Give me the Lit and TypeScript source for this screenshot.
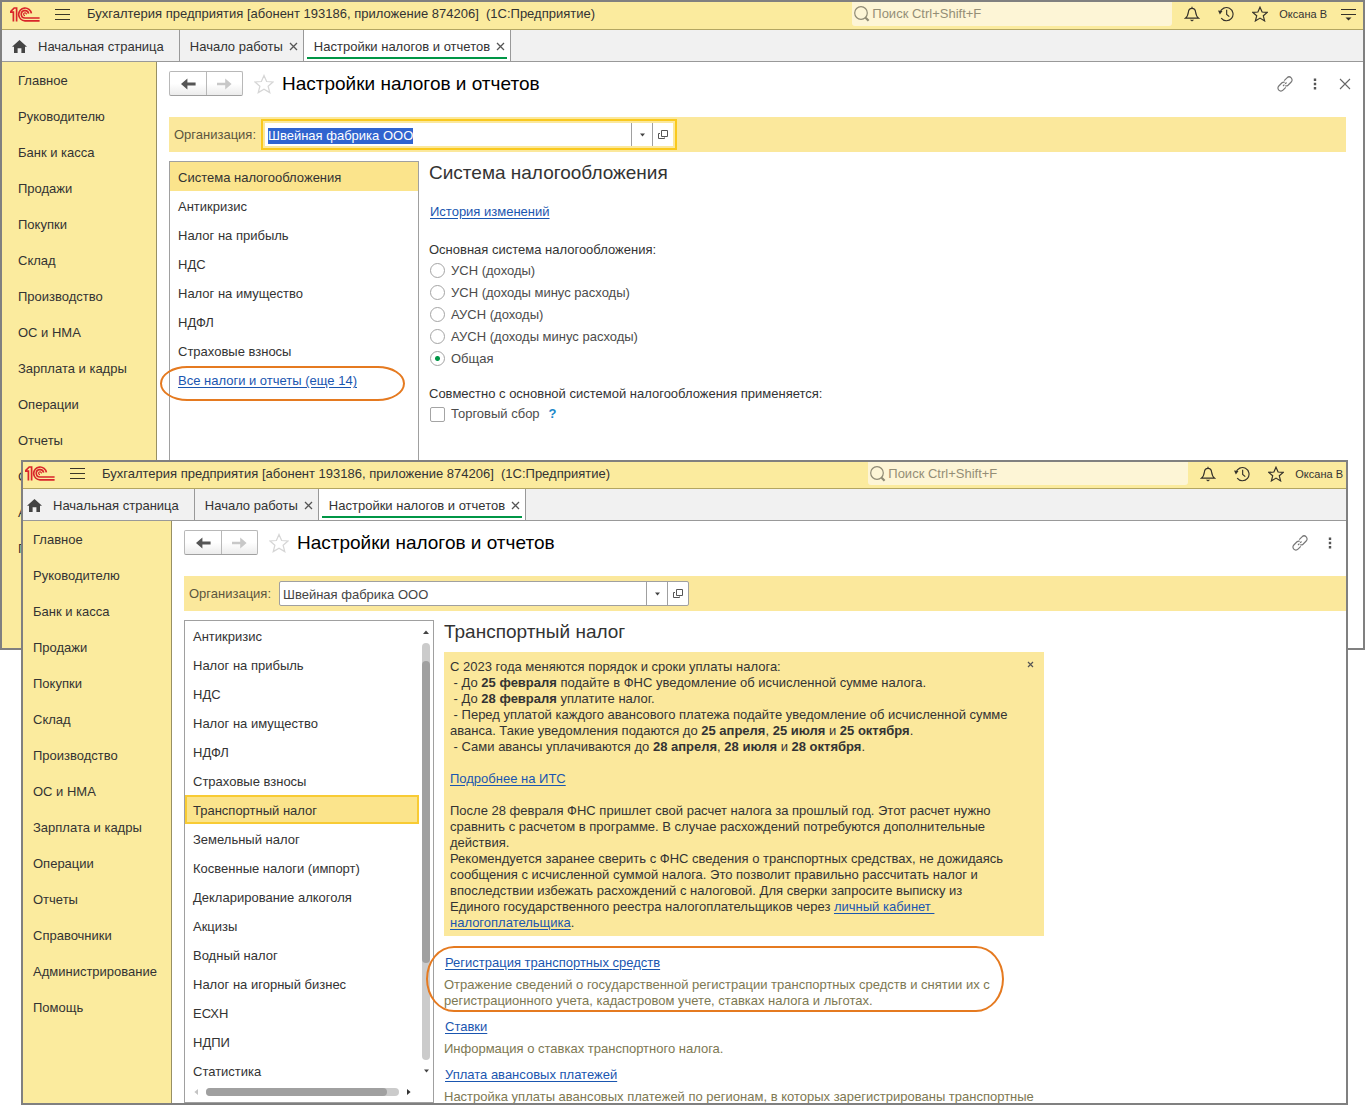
import { LitElement, html, css, svg, nothing } from "lit";
import { customElement, property, query } from "lit/decorators.js";
import { classMap } from "lit/directives/class-map.js";

const SECTIONS = [
  "Главное", "Руководителю", "Банк и касса", "Продажи", "Покупки", "Склад", "Производство",
  "ОС и НМА", "Зарплата и кадры", "Операции", "Отчеты", "Справочники", "Администрирование", "Помощь",
];

const TAXES_SHORT = [
  "Система налогообложения", "Антикризис", "Налог на прибыль", "НДС", "Налог на имущество",
  "НДФЛ", "Страховые взносы",
];

const TAXES_FULL = [
  "Антикризис", "Налог на прибыль", "НДС", "Налог на имущество", "НДФЛ", "Страховые взносы",
  "Транспортный налог", "Земельный налог", "Косвенные налоги (импорт)", "Декларирование алкоголя",
  "Акцизы", "Водный налог", "Налог на игорный бизнес", "ЕСХН", "НДПИ", "Статистика",
];

const SYSTEMS = [
  "УСН (доходы)", "УСН (доходы минус расходы)", "АУСН (доходы)", "АУСН (доходы минус расходы)", "Общая",
];

const starPath = "M8 1.2 L10.1 6 L15.2 6.4 L11.3 9.8 L12.6 14.9 L8 12.1 L3.4 14.9 L4.7 9.8 L0.8 6.4 L5.9 6 Z";

const icons = {
  logo: svg`<svg width="30" height="15" viewBox="0 0 30 15" fill="none" stroke="#d9252a" stroke-width="1.7">
    <path d="M0 5.2 H3.4 V14.4 M0.6 4.6 L4.2 1 H6.6 V14.4"/>
    <path d="M21.4 6.4 A6.4 6.4 0 1 0 15 13.8 H29.6"/>
    <path d="M18.6 6.6 A3.7 3.7 0 1 0 15 11 H29.6"/>
    <path d="M16.4 7.4 A1.4 1.4 0 1 0 15 8.6" stroke-width="1.2"/>
  </svg>`,
  menu: svg`<svg width="15" height="13" viewBox="0 0 15 13" stroke="#3a3628"><path d="M0 1.5H15M0 6.5H15M0 11.5H15"/></svg>`,
  search: svg`<svg width="16" height="16" viewBox="0 0 16 16" fill="none" stroke="#8f8a74"><circle cx="7" cy="7" r="6.3" stroke-width="1.2"/><path d="M11.6 11.8 L14.6 14.8" stroke-width="2.2"/></svg>`,
  bell: svg`<svg width="16" height="16" viewBox="0 0 16 16" fill="none" stroke="#34312a" stroke-width="1.2"><path d="M8 0.8 V2.4 M1.4 12.2 H14.6 C12.4 10.6 12 9 11.6 6 C11.3 3.6 10 2.4 8 2.4 C6 2.4 4.7 3.6 4.4 6 C4 9 3.6 10.6 1.4 12.2 Z"/><path d="M5.8 13.8 H10.2 L8 15.6 Z" fill="#34312a" stroke="none"/></svg>`,
  history: svg`<svg width="16" height="16" viewBox="0 0 17 16" fill="none" stroke="#34312a" stroke-width="1.2"><path d="M2.2 6.4 A7 7 0 1 1 3.4 12.4"/><path d="M9.2 3.6 V8.4 L12 10.8"/><path d="M0 4.2 L4.8 4.8 L2 8.4 Z" fill="#34312a" stroke="none"/></svg>`,
  star: svg`<svg width="16" height="16" viewBox="0 0 16 16" fill="none" stroke="#34312a" stroke-width="1.2"><path d=${starPath}/></svg>`,
  bigStar: svg`<svg width="20" height="20" viewBox="0 0 16 16" fill="none" stroke="#d6d6d6"><path d=${starPath}/></svg>`,
  options: svg`<svg width="15" height="14" viewBox="0 0 15 14" stroke="#34312a"><path d="M0 2.5H15M0 7.5H15"/><path d="M4.5 10.6 H10.5 L7.5 13.6 Z" fill="#34312a" stroke="none"/></svg>`,
  home: svg`<svg width="15" height="13" viewBox="0 0 15 13" fill="#444"><path d="M7.5 0 L15 6.8 H13 V13 H9.4 V8.2 H5.6 V13 H2 V6.8 H0 Z"/></svg>`,
  close: svg`<svg width="9" height="9" viewBox="0 0 9 9" stroke="#555" stroke-width="1.3"><path d="M1 1 L8 8 M8 1 L1 8"/></svg>`,
  closeForm: svg`<svg width="12" height="12" viewBox="0 0 12 12" stroke="#666" stroke-width="1.1"><path d="M1 1 L11 11 M11 1 L1 11"/></svg>`,
  closeNote: svg`<svg width="7" height="7" viewBox="0 0 7 7" stroke="#555" stroke-width="1.2"><path d="M1 1 L6 6 M6 1 L1 6"/></svg>`,
  back: svg`<svg width="15" height="12" viewBox="0 0 15 12" fill="#555"><path d="M0 6 L6.4 0.6 V4.6 H14.6 V7.4 H6.4 V11.4 Z"/></svg>`,
  forward: svg`<svg width="15" height="12" viewBox="0 0 15 12" fill="#c8c8c8"><path d="M14.6 6 L8.2 0.6 V4.8 H0 V7.2 H8.2 V11.4 Z"/></svg>`,
  link: svg`<svg width="16" height="16" viewBox="0 0 16 16" fill="none" stroke="#777" stroke-width="1.2"><path d="M7.2 4.6 L10 1.8 A2.9 2.9 0 0 1 14.2 6 L11 9.2 A2.9 2.9 0 0 1 8.2 9.8"/><path d="M8.8 11.4 L6 14.2 A2.9 2.9 0 0 1 1.8 10 L5 6.8 A2.9 2.9 0 0 1 7.8 6.2"/><path d="M6 10 L10 6" stroke-dasharray="2 1"/></svg>`,
  dots: svg`<svg width="4" height="12" viewBox="0 0 4 12" fill="#555"><path d="M0.8 0.6h2.4v2.4h-2.4zM0.8 4.8h2.4v2.4h-2.4zM0.8 9h2.4v2.4h-2.4z"/></svg>`,
  down: svg`<svg width="5" height="4" viewBox="0 0 5 4" fill="#444"><path d="M0 0.4 H5 L2.5 3.6 Z"/></svg>`,
  open: svg`<svg width="10" height="9" viewBox="0 0 10 9" fill="none" stroke="#555"><path d="M3.5 0.5 H9.5 V6.5 H3.5 Z M2 3.5 H0.5 V8.5 H6.5 V7.5"/></svg>`,
  up: svg`<svg width="6" height="4" viewBox="0 0 6 4" fill="#444"><path d="M0 4 H6 L3 0.4 Z"/></svg>`,
  left: svg`<svg width="4" height="6" viewBox="0 0 4 6" fill="#c4c4c4"><path d="M4 0 V6 L0.4 3 Z"/></svg>`,
  right: svg`<svg width="4" height="6" viewBox="0 0 4 6" fill="#333"><path d="M0 0 V6 L3.6 3 Z"/></svg>`,
};

@customElement("app-window")
export class AppWindow extends LitElement {
  @property({ type: Boolean, reflect: true }) tight = false;

  static styles = css`
    :host {
      --lead: 0px;
      --lift: 0px;
      display: flex;
      flex-direction: column;
      box-sizing: border-box;
      overflow: hidden;
      border: 2px solid #808080;
      background: #fff;
      color: #333;
      font: 13px/16px "Liberation Sans", Arial, sans-serif;
    }
    :host([tight]) {
      --lead: 6px;
      --lift: 1px;
    }
    button {
      display: flex;
      align-items: center;
      justify-content: center;
      padding: 0;
      border: 0;
      background: none;
      color: inherit;
      font: inherit;
    }
    svg {
      display: block;
      flex: none;
    }
    .bar {
      flex: none;
      display: flex;
      align-items: center;
      height: calc(24px - var(--lift));
      padding: 0 7px 3px calc(8px - var(--lead));
      border-bottom: 1px solid #b3a662;
      background: #fbeb9e;
    }
    :host([tight]) .bar {
      padding-right: 3px;
    }
    .menu {
      margin: 0 17px 0 15px;
    }
    .caption {
      flex: 1;
      white-space: nowrap;
    }
    .search {
      display: flex;
      align-items: center;
      align-self: stretch;
      gap: 2px;
      width: 318px;
      padding-left: 2px;
      border-radius: 0 0 3px 3px;
      background: #fdf5d6;
    }
    .search input {
      flex: 1;
      min-width: 0;
      padding: 0;
      border: 0;
      outline: 0;
      background: none;
      font: inherit;
    }
    .search input::placeholder {
      color: #948e76;
      opacity: 1;
    }
    .tools {
      display: flex;
      gap: 18px;
      margin: 0 11px 0 12px;
    }
    .user {
      font-size: 11px;
      white-space: nowrap;
    }
    .options {
      margin-left: 14px;
    }
    .tabs {
      flex: none;
      display: flex;
      height: 31px;
      border-bottom: 1px solid #999;
      background: #f1f1f1;
    }
    .tab {
      display: flex;
      align-items: center;
      gap: 6px;
      padding: 2px 5px 0 10px;
      border-right: 1px solid #999;
      white-space: nowrap;
    }
    .tab.first {
      gap: 11px;
      padding: 2px 15px 0 calc(10px - var(--lead));
    }
    .tab.active {
      padding: 0 3px;
      background: #fff;
    }
    .inner {
      display: flex;
      align-items: center;
      align-self: stretch;
      gap: 6px;
      margin-bottom: 2px;
      padding: 6px 2px 0 7px;
      border-bottom: 2px solid #009646;
    }
    .body {
      flex: 1;
      display: flex;
      min-height: 0;
    }
    .sections {
      flex: none;
      box-sizing: border-box;
      width: calc(155px - var(--lead));
      padding-top: 1px;
      border-right: 1px solid #989064;
      background: #fbeb9e;
    }
    .sections a {
      display: block;
      padding-left: calc(16px - var(--lead));
      color: inherit;
      line-height: 36px;
      text-decoration: none;
      white-space: nowrap;
    }
    .form {
      flex: 1;
      display: flex;
      flex-direction: column;
      min-width: 0;
      padding: 9px 0 0 12px;
    }
    .head {
      flex: none;
      display: flex;
      align-items: center;
      height: 25px;
      margin-bottom: 21px;
      padding-right: 8px;
    }
    :host([tight]) .head {
      padding-right: 6px;
    }
    .nav {
      display: flex;
      box-sizing: border-box;
      height: 25px;
      margin-right: 11px;
      border: 1px solid #b8b8b8;
      border-bottom-color: #a0a0a0;
      border-radius: 2px;
      background: linear-gradient(#fff 50%, #ececec);
    }
    .nav button {
      width: 36px;
    }
    .nav button + button {
      border-left: 1px solid #b8b8b8;
    }
    h1 {
      flex: 1;
      margin: 0 0 0 8px;
      color: #000;
      font-size: 19px;
      font-weight: 400;
      line-height: 24px;
      white-space: nowrap;
    }
    .acts {
      display: flex;
      gap: 10px;
    }
    .acts button {
      width: 20px;
      height: 20px;
    }
  `;

  render() {
    return html`
      <header class="bar">
        ${icons.logo}
        <button class="menu" aria-label="Меню">${icons.menu}</button>
        <span class="caption">Бухгалтерия предприятия [абонент 193186, приложение 874206]&nbsp; (1С:Предприятие)</span>
        <label class="search">${icons.search}<input type="search" aria-label="Поиск" placeholder="Поиск Ctrl+Shift+F" /></label>
        <div class="tools">
          <button aria-label="Уведомления">${icons.bell}</button>
          <button aria-label="История">${icons.history}</button>
          <button aria-label="Избранное">${icons.star}</button>
        </div>
        <span class="user">Оксана В</span>
        ${this.tight ? nothing : html`<button class="options" aria-label="Настройки">${icons.options}</button>`}
      </header>
      <nav class="tabs">
        <div class="tab first">${icons.home}<span>Начальная страница</span></div>
        <div class="tab"><span>Начало работы</span><button aria-label="Закрыть">${icons.close}</button></div>
        <div class="tab active">
          <div class="inner"><span>Настройки налогов и отчетов</span><button aria-label="Закрыть">${icons.close}</button></div>
        </div>
      </nav>
      <div class="body">
        <nav class="sections">${SECTIONS.map((s) => html`<a href="#">${s}</a>`)}</nav>
        <main class="form">
          <div class="head">
            <div class="nav">
              <button aria-label="Назад">${icons.back}</button>
              <button aria-label="Вперед">${icons.forward}</button>
            </div>
            <button aria-label="В избранное">${icons.bigStar}</button>
            <h1>Настройки налогов и отчетов</h1>
            <div class="acts">
              <button aria-label="Ссылка">${icons.link}</button>
              <button aria-label="Еще">${icons.dots}</button>
              ${this.tight ? nothing : html`<button aria-label="Закрыть">${icons.closeForm}</button>`}
            </div>
          </div>
          <slot></slot>
        </main>
      </div>
    `;
  }
}

@customElement("app-root")
export class AppRoot extends LitElement {
  @query(".rear") private rear!: AppWindow;
  @query("#org-back") private orgInput!: HTMLInputElement;

  static styles = css`
    :host {
      position: relative;
      display: block;
      min-height: 100vh;
      overflow: hidden;
      background: #fff;
    }
    app-window {
      position: absolute;
    }
    .rear {
      top: 0;
      left: 0;
      right: 1px;
      height: 650px;
    }
    .front {
      top: 460px;
      left: 21px;
      right: 18px;
      bottom: 2px;
    }
    svg {
      display: block;
      flex: none;
    }
    button {
      display: flex;
      align-items: center;
      justify-content: center;
      padding: 0;
      border: 0;
      background: none;
      font: inherit;
    }
    a {
      color: #1a56b0;
      text-underline-offset: 2px;
    }
    .org {
      flex: none;
      display: flex;
      align-items: center;
      height: 35px;
      margin-bottom: 9px;
      padding-left: 5px;
      background: #fbe89c;
    }
    .rear .org {
      margin-right: 17px;
    }
    .org label {
      width: 90px;
      color: #5c563f;
    }
    .field {
      display: flex;
      box-sizing: border-box;
      width: 410px;
      height: 25px;
      border: 1px solid #a0a0a0;
      border-radius: 2px;
      background: #fff;
    }
    .rear .field {
      border-color: #fbe89c;
      outline: 2px solid #fac91e;
      outline-offset: 1px;
      border-radius: 0;
    }
    .field input {
      flex: 1;
      min-width: 0;
      padding: 3px 3px 0;
      border: 0;
      outline: 0;
      background: none;
      color: #444;
      caret-color: transparent;
      font: inherit;
    }
    .field input::selection {
      background: #3064cf;
      color: #fff;
    }
    .field button {
      width: 21px;
      border-left: 1px solid #a0a0a0;
    }
    .cols {
      flex: 1;
      display: flex;
      gap: 10px;
      min-height: 0;
    }
    .panel {
      flex: none;
      position: relative;
      display: flex;
      flex-direction: column;
      box-sizing: border-box;
      width: 250px;
      border: 1px solid #a0a0a0;
    }
    .rows {
      flex: 1;
      display: flex;
      min-height: 0;
    }
    .list {
      flex: 1;
      margin: 0;
      padding: 0;
      list-style: none;
    }
    .list li {
      box-sizing: border-box;
      height: 29px;
      padding-left: 8px;
      line-height: 31px;
    }
    .rear .list .current {
      background: #fbe48c;
    }
    .front .list .current {
      padding-left: 6px;
      border: 2px solid #f8cb34;
      background: #fbe48c;
      line-height: 27px;
    }
    .vbar {
      display: flex;
      flex-direction: column;
      align-items: center;
      gap: 9px;
      width: 14px;
      padding: 9px 0 11px;
    }
    .vtrack {
      flex: 1;
      display: flex;
      flex-direction: column;
      width: 8px;
      border-radius: 4px;
      background: #cbcbcb;
    }
    .vtrack::before {
      content: "";
      flex: 18;
    }
    .vtrack::after {
      content: "";
      flex: 97;
    }
    .vthumb {
      flex: 302;
      border-radius: 4px;
      background: #a0a0a0;
    }
    .hbar {
      flex: none;
      display: flex;
      align-items: center;
      gap: 8px;
      height: 16px;
      margin: 0 22px 2px 9px;
    }
    .htrack {
      flex: 1;
      height: 8px;
      border-radius: 4px;
      background: #cbcbcb;
    }
    .hthumb {
      width: 94%;
      height: 8px;
      border-radius: 4px;
      background: #a0a0a0;
    }
    .mark {
      position: absolute;
      box-sizing: border-box;
      border: 2px solid #e57a20;
      pointer-events: none;
    }
    .mark.all {
      top: 204px;
      left: -10px;
      width: 245px;
      height: 35px;
      border-radius: 28px / 18px;
    }
    .mark.reg {
      top: -9px;
      left: -18px;
      width: 578px;
      height: 66px;
      border-radius: 28px / 33px;
    }
    .side {
      flex: 1;
      min-width: 0;
    }
    h2 {
      margin: 0;
      font-size: 19px;
      font-weight: 400;
      line-height: 24px;
    }
    .history {
      display: block;
      margin: 19px 0 22px 1px;
    }
    fieldset {
      margin: 0 0 17px;
      padding: 0;
      border: 0;
    }
    legend {
      margin: 0 0 1px;
      padding: 0;
    }
    .opt {
      display: flex;
      align-items: center;
      gap: 6px;
      height: 22px;
      padding-left: 1px;
      color: #4c4c4c;
    }
    .opt .name {
      padding-top: 2px;
    }
    .opt input {
      appearance: none;
      box-sizing: border-box;
      width: 15px;
      height: 15px;
      margin: 0;
      border: 1px solid #a4a4a4;
      border-radius: 2px;
      background: #fff;
    }
    .opt input[type="radio"] {
      border-radius: 50%;
    }
    .opt input:checked {
      background: radial-gradient(circle, #009646 2px, #fff 3px);
    }
    .opt button {
      margin-left: 3px;
      color: #1a86c8;
      font-weight: 700;
    }
    .note {
      display: flex;
      align-items: flex-start;
      box-sizing: border-box;
      width: 600px;
      margin: 8px 0 19px;
      padding: 7px 6px 5px;
      background: #fbe89c;
    }
    .text {
      flex: 1;
      white-space: pre;
    }
    .note button {
      margin: 2px 4px 0 0;
    }
    dl {
      margin: 0;
    }
    dt {
      position: relative;
      padding-left: 1px;
    }
    dd {
      margin: 6px 0 10px;
      color: #7d7852;
    }
  `;

  async firstUpdated() {
    await this.rear.updateComplete;
    this.orgInput.focus();
    this.orgInput.select();
  }

  private org(id: string) {
    return html`<div class="org">
      <label for=${id}>Организация:</label>
      <div class="field">
        <input id=${id} type="text" value="Швейная фабрика ООО" />
        <button aria-label="Выбрать">${icons.down}</button>
        <button aria-label="Открыть">${icons.open}</button>
      </div>
    </div>`;
  }

  private items(names: string[], current: string) {
    return names.map((n) => html`<li class=${classMap({ current: n === current })}>${n}</li>`);
  }

  render() {
    return html`
      <app-window class="rear">
        ${this.org("org-back")}
        <div class="cols">
          <div class="panel">
            <ul class="list">
              ${this.items(TAXES_SHORT, "Система налогообложения")}
              <li><a href="#">Все налоги и отчеты (еще 14)</a></li>
            </ul>
            <div class="mark all"></div>
          </div>
          <section class="side">
            <h2>Система налогообложения</h2>
            <a class="history" href="#">История изменений</a>
            <fieldset>
              <legend>Основная система налогообложения:</legend>
              ${SYSTEMS.map(
                (s) => html`<label class="opt"><input type="radio" name="system" ?checked=${s === "Общая"} /><span class="name">${s}</span></label>`
              )}
            </fieldset>
            <fieldset>
              <legend>Совместно с основной системой налогообложения применяется:</legend>
              <div class="opt"><input id="fee" type="checkbox" /><label for="fee">Торговый сбор</label><button>?</button></div>
            </fieldset>
          </section>
        </div>
      </app-window>

      <app-window class="front" tight>
        ${this.org("org-front")}
        <div class="cols">
          <div class="panel">
            <div class="rows">
              <ul class="list">${this.items(TAXES_FULL, "Транспортный налог")}</ul>
              <div class="vbar">${icons.up}<div class="vtrack"><div class="vthumb"></div></div>${icons.down}</div>
            </div>
            <div class="hbar">${icons.left}<div class="htrack"><div class="hthumb"></div></div>${icons.right}</div>
          </div>
          <section class="side">
            <h2>Транспортный налог</h2>
            <div class="note">
              <div class="text">С 2023 года меняются порядок и сроки уплаты налога:<br> - До <b>25 февраля</b> подайте в ФНС уведомление об исчисленной сумме налога.<br> - До <b>28 февраля</b> уплатите налог.<br> - Перед уплатой каждого авансового платежа подайте уведомление об исчисленной сумме<br>аванса. Такие уведомления подаются до <b>25 апреля</b>, <b>25 июля</b> и <b>25 октября</b>.<br> - Сами авансы уплачиваются до <b>28 апреля</b>, <b>28 июля</b> и <b>28 октября</b>.<br><br><a href="#">Подробнее на ИТС</a><br><br>После 28 февраля ФНС пришлет свой расчет налога за прошлый год. Этот расчет нужно<br>сравнить с расчетом в программе. В случае расхождений потребуются дополнительные<br>действия.<br>Рекомендуется заранее сверить с ФНС сведения о транспортных средствах, не дожидаясь<br>сообщения с исчисленной суммой налога. Это позволит правильно рассчитать налог и<br>впоследствии избежать расхождений с налоговой. Для сверки запросите выписку из<br>Единого государственного реестра налогоплательщиков через <a href="#">личный кабинет <br>налогоплательщика</a>.</div>
              <button aria-label="Закрыть">${icons.closeNote}</button>
            </div>
            <dl>
              <dt><a href="#">Регистрация транспортных средств</a><div class="mark reg"></div></dt>
              <dd>Отражение сведений о государственной регистрации транспортных средств и снятии их с<br />регистрационного учета, кадастровом учете, ставках налога и льготах.</dd>
              <dt><a href="#">Ставки</a></dt>
              <dd>Информация о ставках транспортного налога.</dd>
              <dt><a href="#">Уплата авансовых платежей</a></dt>
              <dd>Настройка уплаты авансовых платежей по регионам, в которых зарегистрированы транспортные</dd>
            </dl>
          </section>
        </div>
      </app-window>
    `;
  }
}
